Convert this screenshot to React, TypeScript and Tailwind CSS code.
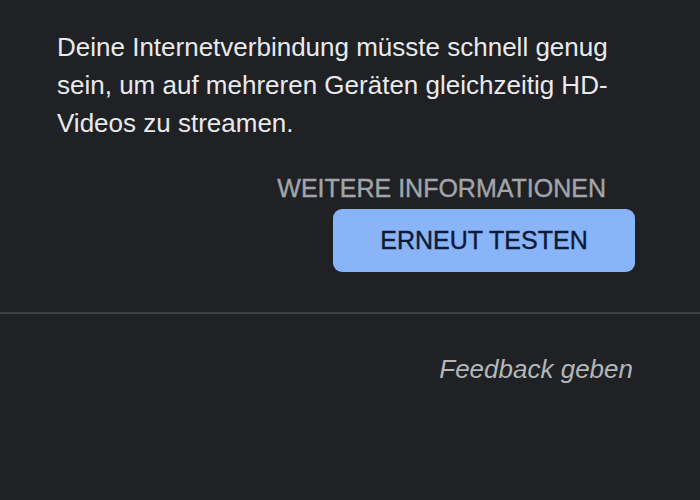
export default function App() {
  return (
    <div
      className="w-[700px] h-[500px] bg-[#202124] overflow-hidden"
      style={{ fontFamily: '"Liberation Sans", Arial, sans-serif' }}
    >
      <div className="pl-[57px] pr-[65px] pt-[28px]">
        <p className="text-[26px] leading-[38px] text-[#e8eaed]">
          Deine Internetverbindung müsste schnell genug sein, um auf mehreren Geräten gleichzeitig HD-Videos zu streamen.
        </p>
        <div className="flex flex-col items-end mt-[31px]">
          <div className="text-[25px] leading-[30px] text-[#a2a5aa] mr-[29px] [-webkit-text-stroke:0.4px]">
            WEITERE INFORMATIONEN
          </div>
          <button className="mt-[6px] w-[302px] h-[63px] rounded-[9px] bg-[#8ab4f8] text-[#0c1a36] text-[25px] leading-none [-webkit-text-stroke:0.4px]">
            ERNEUT TESTEN
          </button>
        </div>
      </div>
      <div className="mt-[40px] h-[2px] bg-[#3c4043]" />
      <div className="flex justify-end pr-[67px] mt-[40px]">
        <span className="italic text-[26px] leading-[30px] text-[#b3b6ba]">Feedback geben</span>
      </div>
    </div>
  );
}
